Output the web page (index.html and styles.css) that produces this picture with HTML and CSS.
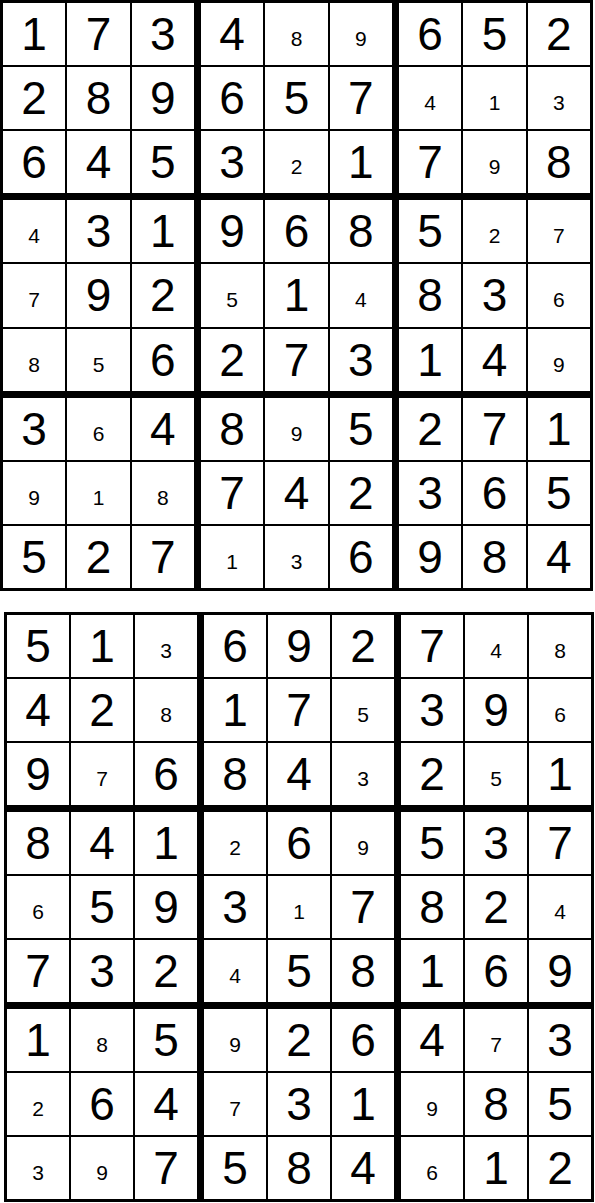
FILE: index.html
```html
<!DOCTYPE html>
<html lang="en">
<head>
    <meta charset="UTF-8">
    <meta name="viewport" content="width=device-width, initial-scale=1.0">
    <title>Sudoku Solutions</title>
    <link rel="stylesheet" href="styles.css">
</head>
<body>
    <div class="board" id="board1"></div>
    <div class="board second" id="board2"></div>

    <script>
        // "." in front of a digit marks a filled-in (small) number, the rest are givens
        const puzzles = {
            board1: [
                "1 7 3 4 .8 .9 6 5 2",
                "2 8 9 6 5 7 .4 .1 .3",
                "6 4 5 3 .2 1 7 .9 8",
                ".4 3 1 9 6 8 5 .2 .7",
                ".7 9 2 .5 1 .4 8 3 .6",
                ".8 .5 6 2 7 3 1 4 .9",
                "3 .6 4 8 .9 5 2 7 1",
                ".9 .1 .8 7 4 2 3 6 5",
                "5 2 7 .1 .3 6 9 8 4"
            ],
            board2: [
                "5 1 .3 6 9 2 7 .4 .8",
                "4 2 .8 1 7 .5 3 9 .6",
                "9 .7 6 8 4 .3 2 .5 1",
                "8 4 1 .2 6 .9 5 3 7",
                ".6 5 9 3 .1 7 8 2 .4",
                "7 3 2 .4 5 8 1 6 9",
                "1 .8 5 .9 2 6 4 .7 3",
                ".2 6 4 .7 3 1 .9 8 5",
                ".3 .9 7 5 8 4 .6 1 2"
            ]
        };

        function buildBoard(id, rows) {
            const board = document.getElementById(id);
            const grid = rows.map(row => row.split(" "));

            for (let b = 0; b < 9; b++) {
                const box = document.createElement("div");
                box.className = "box";
                const top = Math.floor(b / 3) * 3;
                const left = (b % 3) * 3;

                for (let r = top; r < top + 3; r++) {
                    for (let c = left; c < left + 3; c++) {
                        const value = grid[r][c];
                        const cell = document.createElement("div");
                        cell.className = "cell";
                        if (value.startsWith(".")) {
                            cell.classList.add("small");
                            cell.textContent = value.slice(1);
                        } else {
                            cell.textContent = value;
                        }
                        box.appendChild(cell);
                    }
                }
                board.appendChild(box);
            }
        }

        buildBoard("board1", puzzles.board1);
        buildBoard("board2", puzzles.board2);
    </script>
</body>
</html>
```

FILE: styles.css
```css
body {
    margin: 0;
    background-color: #fff;
    font-family: "Liberation Sans", Arial, Helvetica, sans-serif;
    color: #000;
}

.board {
    width: 593px;
    height: 591px;
    box-sizing: border-box;
    padding: 3px;
    background-color: #000;
    display: grid;
    grid-template-columns: repeat(3, 1fr);
    grid-template-rows: repeat(3, 1fr);
    gap: 7px;
}

.board.second {
    width: 590px;
    height: 590px;
    margin: 21px 0 0 4px;
}

.box {
    display: grid;
    grid-template-columns: repeat(3, 1fr);
    grid-template-rows: repeat(3, 1fr);
    gap: 2px;
}

.cell {
    background-color: #fff;
    display: flex;
    align-items: center;
    justify-content: center;
    font-size: 46px;
    line-height: 1;
}

.cell.small {
    font-size: 21px;
    padding-top: 9px;
}
```
